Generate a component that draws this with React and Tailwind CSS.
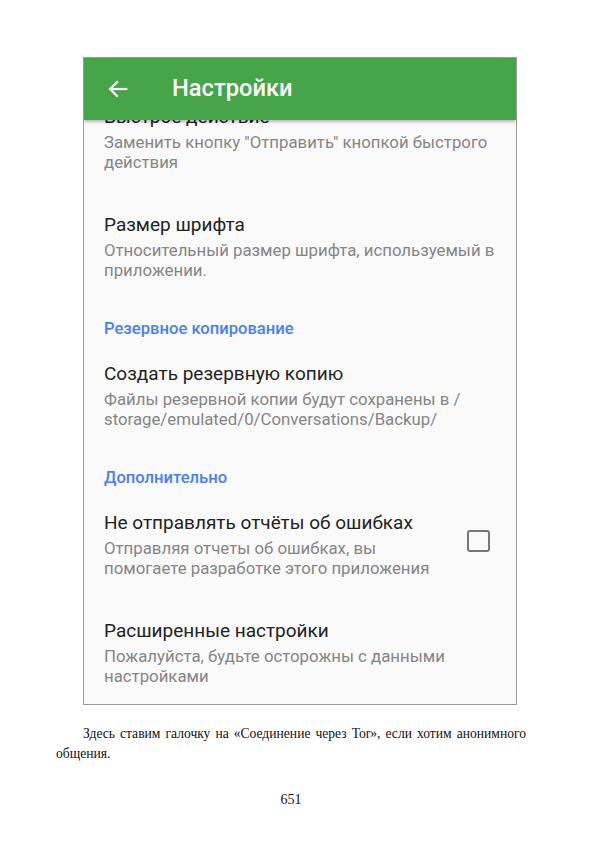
import React from "react";

const roboto = { fontFamily: "Roboto, 'Noto Sans', sans-serif" };

function Item({ title, lines, checkbox }) {
  return (
    <div className="flex items-center pl-[20px] pr-[26px] pt-[20px] pb-[21px]">
      <div className="flex-1 min-w-0">
        <div className="text-[19px] leading-[24px] text-[#222222] whitespace-nowrap">{title}</div>
        <div className="mt-[3px] text-[16.8px] leading-[20px] text-[#858585] whitespace-nowrap">
          {lines.map((l, i) => (
            <div key={i}>{l}</div>
          ))}
        </div>
      </div>
      {checkbox && (
        <div className="mb-[7px] w-[23px] h-[22px] border-[2.5px] border-[#777777] rounded-[3px] shrink-0" />
      )}
    </div>
  );
}

function Header({ children }) {
  return (
    <div className="pl-[20px] pt-[18px] pb-[3px] text-[16.6px] leading-[20px] font-medium text-[#4a80ee] whitespace-nowrap">
      {children}
    </div>
  );
}

export default function App() {
  return (
    <div className="w-[600px] h-[849px] bg-white flex flex-col overflow-hidden">
      <div className="pt-[57px] pl-[83px]">
        <div
          className="w-[434px] h-[648px] border border-[#9a9a9a] bg-[#fafafa] flex flex-col overflow-hidden"
          style={roboto}
        >
          <div className="relative z-10 h-[62px] shrink-0 bg-[#45a548] flex items-center shadow-[0_2px_3px_rgba(0,0,0,0.25)]">
            <svg
              className="ml-[23px]"
              width="22"
              height="22"
              viewBox="0 0 24 24"
              fill="none"
              stroke="white"
              strokeWidth="2.4"
              strokeLinecap="square"
            >
              <path d="M21 12H4" />
              <path d="M11 4.5L3.5 12L11 19.5" />
            </svg>
            <div className="ml-[43px] text-[23.7px] font-medium text-white leading-none">Настройки</div>
          </div>
          <div className="flex-1 overflow-hidden">
            <div className="-mt-[35px]">
              <Item
                title="Быстрое действие"
                lines={['Заменить кнопку "Отправить" кнопкой быстрого', "действия"]}
              />
              <Item
                title="Размер шрифта"
                lines={["Относительный размер шрифта, используемый в", "приложении."]}
              />
              <Header>Резервное копирование</Header>
              <Item
                title="Создать резервную копию"
                lines={["Файлы резервной копии будут сохранены в /", "storage/emulated/0/Conversations/Backup/"]}
              />
              <Header>Дополнительно</Header>
              <Item
                title="Не отправлять отчёты об ошибках"
                lines={["Отправляя отчеты об ошибках, вы", "помогаете разработке этого приложения"]}
                checkbox
              />
              <Item
                title="Расширенные настройки"
                lines={["Пожалуйста, будьте осторожны с данными", "настройками"]}
              />
            </div>
          </div>
        </div>
      </div>
      <div
        className="mt-[19px] pl-[56px] w-[526px] text-[13.6px] leading-[20px] text-[#111111]"
        style={{ fontFamily: "'Liberation Serif', 'Times New Roman', serif" }}
      >
        <p className="text-justify indent-[27px]">
          Здесь ставим галочку на «Соединение через Tor», если хотим анонимного общения.
        </p>
        <p className="mt-[26px] text-center ml-[-56px] w-[582px] text-[14px]">651</p>
      </div>
    </div>
  );
}
